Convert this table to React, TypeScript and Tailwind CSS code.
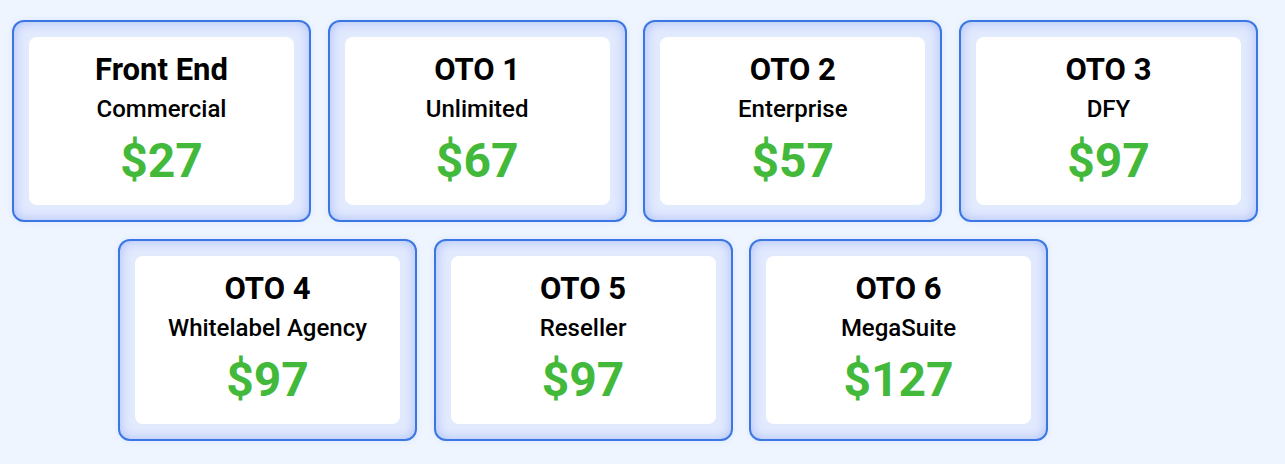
const rowOne = [
  { title: "Front End", sub: "Commercial", price: "$27" },
  { title: "OTO 1", sub: "Unlimited", price: "$67" },
  { title: "OTO 2", sub: "Enterprise", price: "$57" },
  { title: "OTO 3", sub: "DFY", price: "$97" },
];

const rowTwo = [
  { title: "OTO 4", sub: "Whitelabel Agency", price: "$97" },
  { title: "OTO 5", sub: "Reseller", price: "$97" },
  { title: "OTO 6", sub: "MegaSuite", price: "$127" },
];

type Plan = { title: string; sub: string; price: string };

const PlanCard = ({ plan }: { plan: Plan }) => {
  return (
    <div className="w-[299px] h-[202px] shrink-0 rounded-[12px] border-2 border-[#3b76e2] bg-[#e2eafe] p-[15px] shadow-[inset_0_0_12px_rgba(70,110,235,0.35),0_0_6px_rgba(59,130,246,0.12)]">
      <div className="h-full rounded-[8px] bg-white pt-[15px] text-center">
        <h3 className="text-[31px] leading-[36px] font-bold text-black">{plan.title}</h3>
        <p className="mt-[5px] text-[24px] leading-[32px] font-medium text-black">{plan.sub}</p>
        <p className="mt-[12px] text-[48px] leading-[48px] font-bold text-[#43b93b]">{plan.price}</p>
      </div>
    </div>
  );
};

export default function App() {
  return (
    <div
      className="w-[1285px] h-[464px] bg-[#eff5ff] pt-[20px] overflow-hidden"
      style={{ fontFamily: "Roboto, 'Liberation Sans', sans-serif" }}
    >
      {/* first row */}
      <div className="flex gap-[16.67px] pl-[12px]">
        {rowOne.map((p) => (
          <PlanCard key={p.title} plan={p} />
        ))}
      </div>

      {/* second row */}
      <div className="mt-[17px] flex gap-[16.5px] pl-[118px]">
        {rowTwo.map((p) => (
          <PlanCard key={p.title} plan={p} />
        ))}
      </div>
    </div>
  );
}
